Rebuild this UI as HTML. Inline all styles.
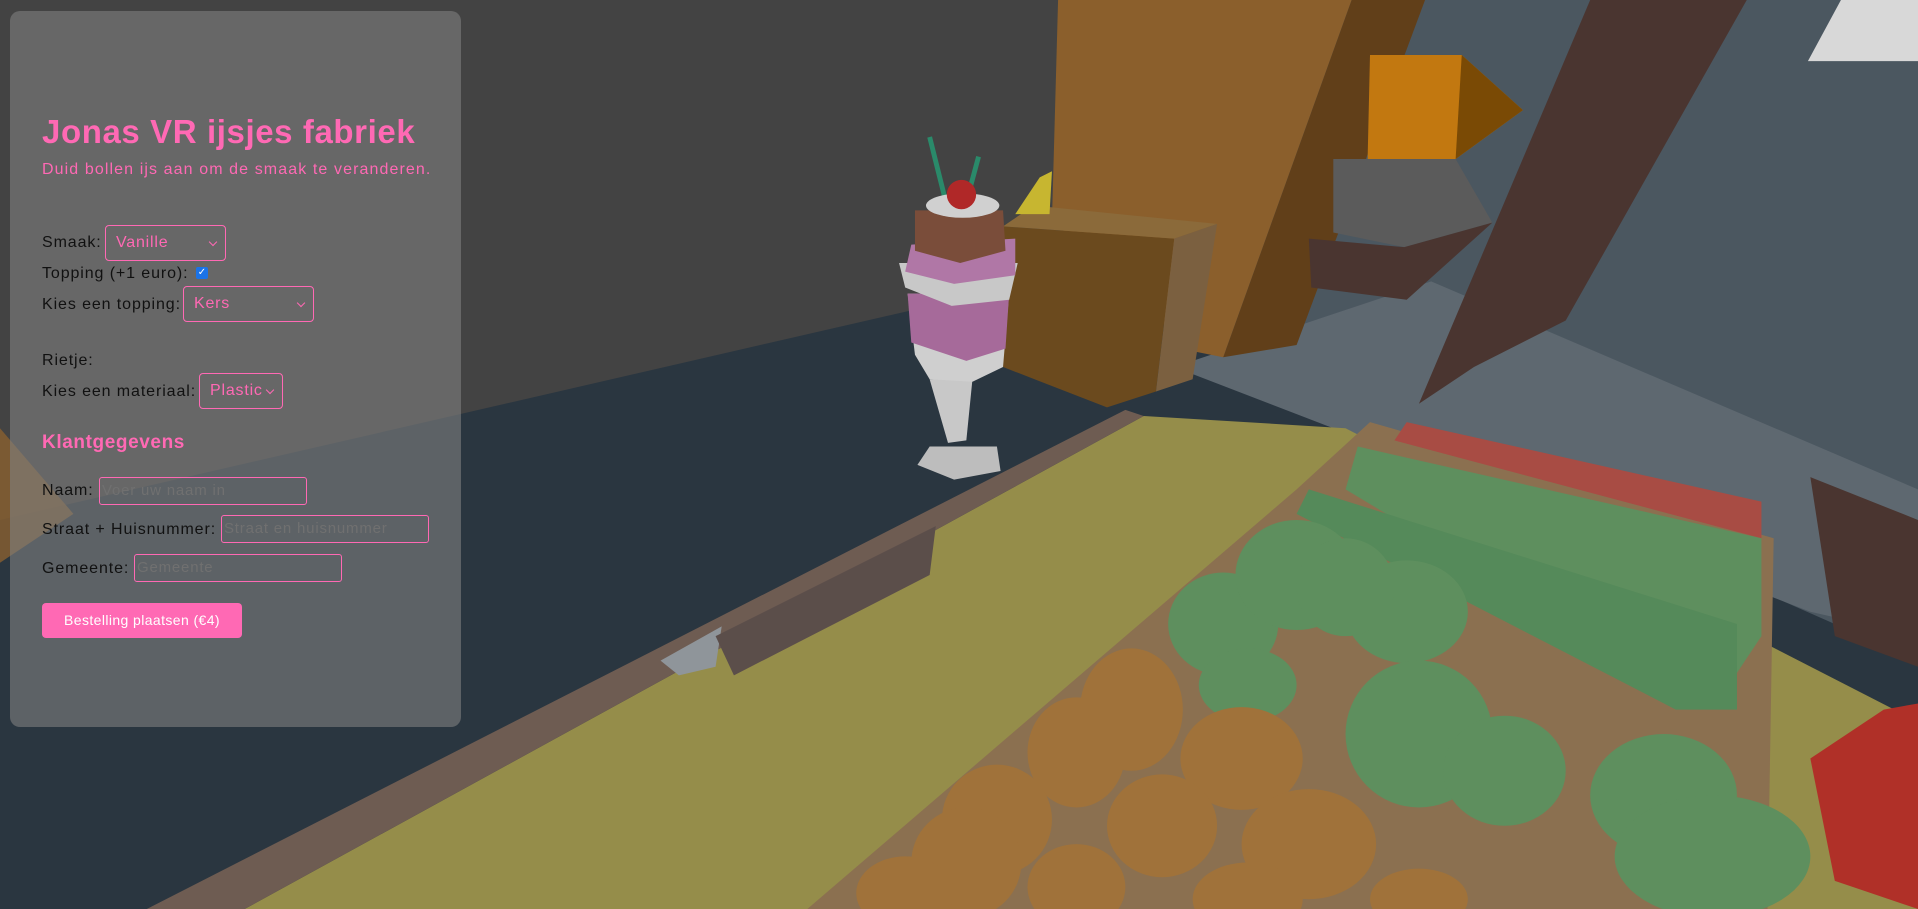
<!DOCTYPE html>
<html><head><meta charset="utf-8"><style>
html,body{margin:0;padding:0;width:1918px;height:909px;overflow:hidden;background:#434343;font-family:"Liberation Sans",sans-serif}
svg.bg{position:absolute;left:0;top:0;width:1918px;height:909px}
.panel{position:absolute;left:10px;top:11px;width:451px;height:716px;background:rgba(128,128,128,0.6);border-radius:10px}
.t{position:absolute;white-space:nowrap;color:#111;font-size:16px;letter-spacing:0.9px}
.pink{color:#ff69b4}
.sel{position:absolute;border:1px solid #ff69b4;border-radius:4px;color:#ff69b4;font-size:16px;letter-spacing:0.8px;box-sizing:border-box;line-height:33px;padding-left:10px}
.sel:after{content:"";position:absolute;right:9px;top:13px;width:5px;height:5px;border-right:1.5px solid #ff69b4;border-bottom:1.5px solid #ff69b4;transform:rotate(45deg)}
.inp{position:absolute;border:1px solid #ff69b4;border-radius:3px;box-sizing:border-box;color:#707070;font-size:15px;letter-spacing:0.8px;line-height:26px;padding-left:2px;overflow:hidden;white-space:nowrap}
</style></head><body>
<svg class="bg" viewBox="0 0 1568 743" preserveAspectRatio="none">
<rect width="1568" height="743" fill="#434343"/>
<polygon points="0,425 1000,195 1568,150 1568,743 0,743" fill="#2a3640"/>
<polygon points="1000,0 1568,0 1568,540 1000,290" fill="#4b5760"/>
<polygon points="960,300 1170,230 1568,400 1568,520 1480,500" fill="#5e6870"/>
<polygon points="1478,50 1505,0 1568,0 1568,50" fill="#d8d8d8"/>
<polygon points="1300,0 1428,0 1280,262 1205,300 1160,330" fill="#4a3530"/>
<polygon points="1480,390 1568,425 1568,545 1500,520" fill="#4a3530"/>
<polygon points="935,340 1100,350 1568,590 1568,743 200,743" fill="#958d4a"/>
<polygon points="935,340 200,743 120,743 920,335" fill="#6e5c52"/>
<polygon points="1060,400 1120,345 1450,440 1445,743 660,743" fill="#8b7050"/>
<polygon points="865,0 1105,0 1000,292 975,287 860,180" fill="#8b5f2c"/>
<polygon points="1105,0 1165,0 1060,282 1000,292" fill="#613f19"/>
<polygon points="1120,45 1195,45 1245,90 1190,130 1118,132" fill="#c27810"/>
<polygon points="1195,45 1245,90 1190,130" fill="#7a4a05"/>
<polygon points="1090,130 1190,130 1220,182 1148,202 1090,190" fill="#5b5b5b"/>
<polygon points="1070,195 1148,202 1220,182 1150,245 1072,235" fill="#4a3530"/>
<polygon points="820,185 960,195 945,320 905,333 820,300" fill="#6b4a1e"/>
<polygon points="845,168 995,183 960,195 820,185" fill="#8b6a3a"/>
<polygon points="960,195 995,183 975,310 945,320" fill="#7b6040"/>
<polygon points="850,145 860,140 858,175 830,175" fill="#c7b630"/>
<line x1="760" y1="112" x2="772" y2="160" stroke="#2a8a6a" stroke-width="4"/>
<line x1="800" y1="128" x2="790" y2="165" stroke="#2a8a6a" stroke-width="4"/>
<polygon points="760,365 815,365 818,385 780,392 750,380" fill="#bdbdbd"/>
<polygon points="760,310 795,310 790,360 775,362" fill="#c8c8c8"/>
<polygon points="742,240 825,240 820,300 795,312 760,310 748,290" fill="#cfcfcf"/>
<polygon points="742,240 825,240 822,285 790,295 745,280" fill="#a66a9a"/>
<polygon points="735,215 832,215 825,245 778,250 740,235" fill="#c8c8c8"/>
<polygon points="745,200 830,195 830,225 780,232 740,222" fill="#b077a6"/>
<polygon points="748,172 820,172 822,205 785,215 748,205" fill="#7a4d3a"/>
<ellipse cx="787" cy="168" rx="30" ry="10" fill="#d0d0d0"/>
<circle cx="786" cy="159" r="12" fill="#b02828"/>
<polygon points="540,540 590,512 585,545 555,552" fill="#8f959a"/>
<polygon points="585,520 765,430 760,470 600,552" fill="#5b4e4a"/>
<g fill="#5e8f5e">
<polygon points="1150,345 1440,410 1440,440 1140,360" fill="#a84c44"/>
<polygon points="1110,365 1440,440 1440,520 1400,580 1100,400"/>
<polygon points="1070,400 1420,510 1420,580 1370,580 1060,420" fill="#558a5a"/>
<ellipse cx="1000" cy="510" rx="45" ry="42"/><ellipse cx="1060" cy="470" rx="50" ry="45"/><ellipse cx="1150" cy="500" rx="50" ry="42"/>
<ellipse cx="1160" cy="600" rx="60" ry="60"/><ellipse cx="1230" cy="630" rx="50" ry="45"/><ellipse cx="1360" cy="650" rx="60" ry="50"/>
<ellipse cx="1400" cy="700" rx="80" ry="50"/><ellipse cx="1100" cy="480" rx="40" ry="40"/><ellipse cx="1020" cy="560" rx="40" ry="30"/>
</g>
<g fill="#a0723a">
<ellipse cx="925" cy="580" rx="42" ry="50"/><ellipse cx="880" cy="615" rx="40" ry="45"/><ellipse cx="1015" cy="620" rx="50" ry="42"/>
<ellipse cx="950" cy="675" rx="45" ry="42"/><ellipse cx="1070" cy="690" rx="55" ry="45"/><ellipse cx="815" cy="670" rx="45" ry="45"/>
<ellipse cx="790" cy="705" rx="45" ry="45"/><ellipse cx="880" cy="725" rx="40" ry="35"/><ellipse cx="1020" cy="735" rx="45" ry="30"/><ellipse cx="740" cy="730" rx="40" ry="30"/><ellipse cx="1160" cy="735" rx="40" ry="25"/>
</g>
<polygon points="1480,620 1540,580 1568,575 1568,743 1500,720" fill="#b03028"/>
<polygon points="0,350 60,420 0,460" fill="#8a6030" opacity="0.8"/>
</svg>
<div class="panel"></div>
<div class="t pink" style="left:42px;top:113px;font-size:33px;font-weight:bold;letter-spacing:0.6px">Jonas VR ijsjes fabriek</div>
<div class="t pink" style="left:42px;top:161px;font-size:16px;letter-spacing:1.1px">Duid bollen ijs aan om de smaak te veranderen.</div>
<div class="t" style="left:42px;top:234px">Smaak:</div>
<div class="sel" style="left:105px;top:225px;width:121px;height:36px">Vanille</div>
<div class="t" style="left:42px;top:265px">Topping (+1 euro):</div>
<div style="position:absolute;left:196px;top:267px;width:12px;height:12px;background:#1a73e8;border-radius:2px;color:#fff;font-size:10px;line-height:12px;text-align:center">✓</div>
<div class="t" style="left:42px;top:296px">Kies een topping:</div>
<div class="sel" style="left:183px;top:286px;width:131px;height:36px">Kers</div>
<div class="t" style="left:42px;top:352px">Rietje:</div>
<div class="t" style="left:42px;top:383px">Kies een materiaal:</div>
<div class="sel" style="left:199px;top:373px;width:84px;height:36px">Plastic</div>
<div class="t pink" style="left:42px;top:432px;font-size:19px;font-weight:bold;letter-spacing:0.6px">Klantgegevens</div>
<div class="t" style="left:42px;top:482px">Naam:</div>
<div class="inp" style="left:99px;top:477px;width:208px;height:28px">Voer uw naam in</div>
<div class="t" style="left:42px;top:521px">Straat + Huisnummer:</div>
<div class="inp" style="left:221px;top:515px;width:208px;height:28px">Straat en huisnummer</div>
<div class="t" style="left:42px;top:560px">Gemeente:</div>
<div class="inp" style="left:134px;top:554px;width:208px;height:28px">Gemeente</div>
<div style="position:absolute;left:42px;top:603px;width:200px;height:35px;background:#ff69b4;border-radius:4px;color:#fff;font-size:14px;letter-spacing:0.4px;text-align:center;line-height:35px">Bestelling plaatsen (€4)</div>
</body></html>
